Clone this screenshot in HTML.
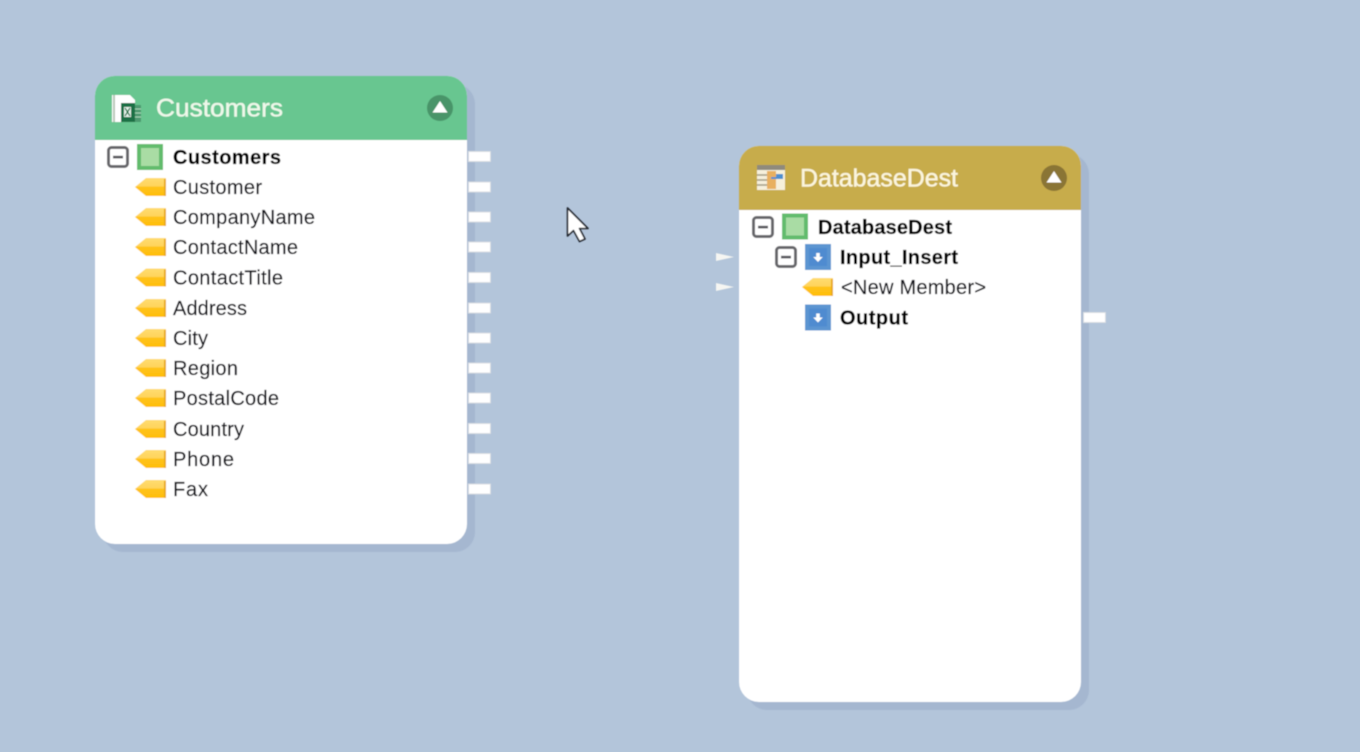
<!DOCTYPE html>
<html><head><meta charset="utf-8"><title>Diagram</title>
<style>
html,body{margin:0;padding:0;background:#b3c5da;width:1360px;height:752px;overflow:hidden}
svg{display:block;position:absolute;left:0;top:0}
text{font-family:"Liberation Sans",sans-serif;fill:#101018;stroke:#101018;stroke-width:.2px;font-size:20px}
.b{font-weight:bold;fill:#000;stroke:#000;stroke-width:.25px}
.t{fill:#eef8ea;stroke:#eef8ea;stroke-width:.45px;font-size:25px}
.t2{fill:#fbf5dd;stroke:#fbf5dd;stroke-width:.45px;font-size:25px}
</style></head><body>
<svg width="1360" height="752" viewBox="0 0 1360 752" xmlns="http://www.w3.org/2000/svg">
<defs>
<filter id="s" x="-5%" y="-5%" width="110%" height="110%"><feGaussianBlur stdDeviation="0.45"/></filter>
<linearGradient id="k" x1="0" y1="0" x2="0" y2="1"><stop offset="0" stop-color="#ffdc70"/><stop offset=".45" stop-color="#ffd45c"/><stop offset=".5" stop-color="#ffc21a"/><stop offset="1" stop-color="#ffbe0c"/></linearGradient>
<g id="key"><path d="M135 9 146 0H166V18H146Z" fill="url(#k)"/><rect x="164" y="1" width="2" height="17" fill="#e8aa20"/></g>
<g id="minus"><rect x="1.500" y="1.500" width="19" height="19" rx="3" fill="#fff" stroke="#66666a" stroke-width="3"/><rect x="6" y="9.800" width="10" height="2.600" fill="#55555a"/></g>
<g id="green"><rect width="26" height="26" fill="#62bc6d"/><rect x="4" y="4" width="18" height="18" fill="#a9dca4"/></g>
<g id="blue"><rect width="26" height="26" fill="#5b95d1"/><rect x="4" y="4" width="18" height="18" fill="#4f8bd0"/><path d="M11.200 9h3.600v4h3l-4.800 5-4.800-5h3Z" fill="#fff"/></g>
<g id="port"><rect x="0.500" y="0.500" width="22" height="10" fill="#fff" stroke="#d9dde2"/></g>
<g id="arrow"><path d="M0 0 18 4 0 8Z" fill="#f6f6f2"/></g>
</defs>
<rect width="1360" height="752" fill="#b3c5da"/>
<g filter="url(#s)">
<!-- Customers card -->
<rect x="103" y="84" width="372" height="468" rx="20" fill="#a5b7d0"/>
<rect x="95" y="76" width="372" height="468" rx="20" fill="#fff"/>
<path d="M95 140V96a20 20 0 0 1 20-20H447a20 20 0 0 1 20 20V140Z" fill="#68c690"/>
<!-- Excel icon -->
<path d="M112 95H130L135 100V104H121V122H112Z" fill="#fff"/>
<rect x="113" y="95" width="2" height="27" fill="#b8c8b8"/>
<rect x="121" y="103" width="14" height="19" fill="#1d7044"/>
<rect x="124" y="107" width="7" height="10" fill="#e6f3ea"/>
<path d="M125 108l5 8m0-8-5 8" stroke="#1d7044" stroke-width="1.200"/>
<rect x="135" y="105" width="6" height="17" fill="#4d9a70"/>
<path d="M135 109h6M135 113h6M135 117h6" stroke="#a9d6b8" stroke-width="1"/>
<text class="t" x="156" y="116.500" textLength="127" lengthAdjust="spacingAndGlyphs">Customers</text>
<circle cx="440" cy="108" r="13" fill="#4a9469"/>
<path d="M440 101 447.500 112.500H432.500Z" fill="#fff"/>
<use href="#minus" x="107" y="146"/>
<use href="#green" x="137" y="144"/>
<text class="b" x="173" y="164" textLength="108">Customers</text>
<use href="#key" y="178"/><text x="173" y="194" textLength="89">Customer</text>
<use href="#key" y="208"/><text x="173" y="224" textLength="142">CompanyName</text>
<use href="#key" y="238"/><text x="173" y="254" textLength="125">ContactName</text>
<use href="#key" y="268.500"/><text x="173" y="284.500" textLength="110">ContactTitle</text>
<use href="#key" y="299"/><text x="173" y="315" textLength="74">Address</text>
<use href="#key" y="329"/><text x="173" y="345" textLength="35">City</text>
<use href="#key" y="359"/><text x="173" y="375" textLength="65">Region</text>
<use href="#key" y="389"/><text x="173" y="405" textLength="106">PostalCode</text>
<use href="#key" y="420"/><text x="173" y="436" textLength="71">Country</text>
<use href="#key" y="450"/><text x="173" y="466" textLength="61">Phone</text>
<use href="#key" y="480"/><text x="173" y="496" textLength="35">Fax</text>
<use href="#port" x="468" y="151"/>
<use href="#port" x="468" y="181.500"/>
<use href="#port" x="468" y="211.500"/>
<use href="#port" x="468" y="241.500"/>
<use href="#port" x="468" y="272"/>
<use href="#port" x="468" y="302.500"/>
<use href="#port" x="468" y="332.500"/>
<use href="#port" x="468" y="362.500"/>
<use href="#port" x="468" y="392.500"/>
<use href="#port" x="468" y="423"/>
<use href="#port" x="468" y="453"/>
<use href="#port" x="468" y="483.500"/>
<!-- DatabaseDest card -->
<rect x="747" y="154" width="342" height="556" rx="20" fill="#a5b7d0"/>
<rect x="739" y="146" width="342" height="556" rx="20" fill="#fff"/>
<path d="M739 210V166a20 20 0 0 1 20-20H1061a20 20 0 0 1 20 20V210Z" fill="#c7ac4c"/>
<!-- DB icon -->
<rect x="757" y="165" width="28" height="25" fill="#f6f0dc"/>
<rect x="757" y="165" width="28" height="5" fill="#8f8a7c"/>
<path d="M757 175h10M757 180h10M757 185h10" stroke="#a09a84" stroke-width="1.500"/>
<rect x="767" y="171" width="9" height="18" fill="#e8b060"/>
<rect x="776" y="174" width="7" height="5" fill="#4d8fd0"/>
<rect x="771" y="177" width="5" height="2" fill="#4d8fd0"/>
<text class="t2" x="800" y="186.500" textLength="158" lengthAdjust="spacingAndGlyphs">DatabaseDest</text>
<circle cx="1054" cy="178" r="13" fill="#8a7536"/>
<path d="M1054 171 1061.500 182.500H1046.500Z" fill="#fff"/>
<use href="#minus" x="752" y="216"/>
<use href="#green" x="782" y="213.500"/>
<text class="b" x="818" y="234" textLength="134">DatabaseDest</text>
<use href="#minus" x="775" y="246"/>
<use href="#blue" x="805" y="244"/>
<text class="b" x="840" y="264" textLength="118">Input_Insert</text>
<use href="#key" x="667" y="278"/>
<text x="841" y="294" textLength="145">&lt;New Member&gt;</text>
<use href="#blue" x="805" y="304.500"/>
<text class="b" x="840" y="324.500" textLength="68">Output</text>
<use href="#arrow" x="716" y="253"/>
<use href="#arrow" x="716" y="283"/>
<use href="#port" x="1083" y="312"/>
<!-- Cursor -->
<path d="M567.500 208V236L573.500 230.500 579.500 241.500 585 239 579.500 228.500H588Z" fill="#fff" stroke="#22262e" stroke-width="1.600" stroke-linejoin="round"/>
</g>
</svg>
</body></html>
